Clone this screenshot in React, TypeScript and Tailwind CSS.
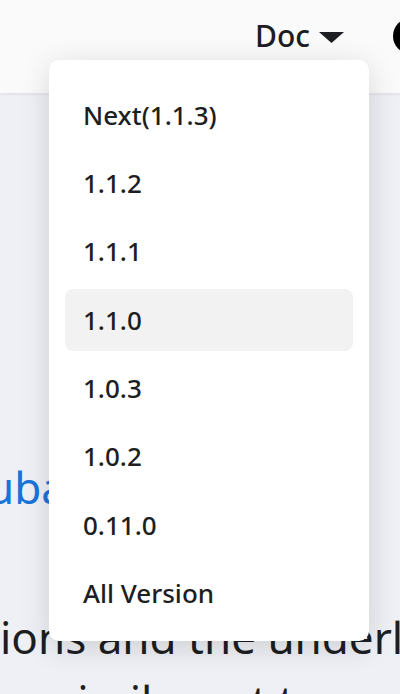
const versions = ['Next(1.1.3)', '1.1.2', '1.1.1', '1.1.0', '1.0.3', '1.0.2', '0.11.0', 'All Version'];

export default function App() {
  const active = '1.1.0';

  return (
    <div
      className="relative w-[400px] h-[694px] overflow-hidden bg-[#eef0f5] text-[#1c1e21]"
      style={{ fontFamily: '"Noto Sans", "Open Sans", sans-serif' }}
    >
      {/* Navbar */}
      <nav className="relative z-10 h-[93px] flex items-start justify-end pt-[18px] bg-[#fafafb] shadow-[0_1px_4px_rgba(0,0,0,0.08)]">
        <div className="h-9 flex items-center gap-[9px]">
          <span className="text-[30px] font-medium leading-none">Doc</span>
          <svg width="25" height="11" viewBox="0 0 25 11" className="mt-[3px]">
            <path d="M0 0 L25 0 L12.5 11 Z" fill="#1c1e21" />
          </svg>
        </div>
        <div className="ml-[49px] -mr-[29px] w-9 h-9 rounded-full bg-black" />
      </nav>

      {/* Page content behind the menu */}
      <div className="pt-[362px]">
        <p className="text-[44px] leading-[64px] text-[#1a73d9] whitespace-nowrap -ml-[13px]">ubase link</p>
        <p className="mt-[86px] text-[44px] leading-[64px] whitespace-nowrap">ions and the underlying</p>
        <p className="text-[44px] leading-[64px] whitespace-nowrap ml-[20px]">a similar ort to</p>
      </div>

      {/* Version dropdown */}
      <div className="absolute left-[49px] top-[60px] z-20 w-[320px] rounded-[10px] bg-white pt-[24px] pb-4 px-4 shadow-[0_6px_30px_rgba(0,0,0,0.14)]">
        <ul className="flex flex-col gap-[6.4px]">
          {versions.map((v) => (
            <li
              key={v}
              className={`h-[62px] flex items-center pl-[18px] rounded-[8px] text-[26px] font-medium text-[#1c1e21] ${v === active ? 'bg-[#f2f2f2]' : ''}`}
            >
              {v}
            </li>
          ))}
        </ul>
      </div>
    </div>
  );
}
